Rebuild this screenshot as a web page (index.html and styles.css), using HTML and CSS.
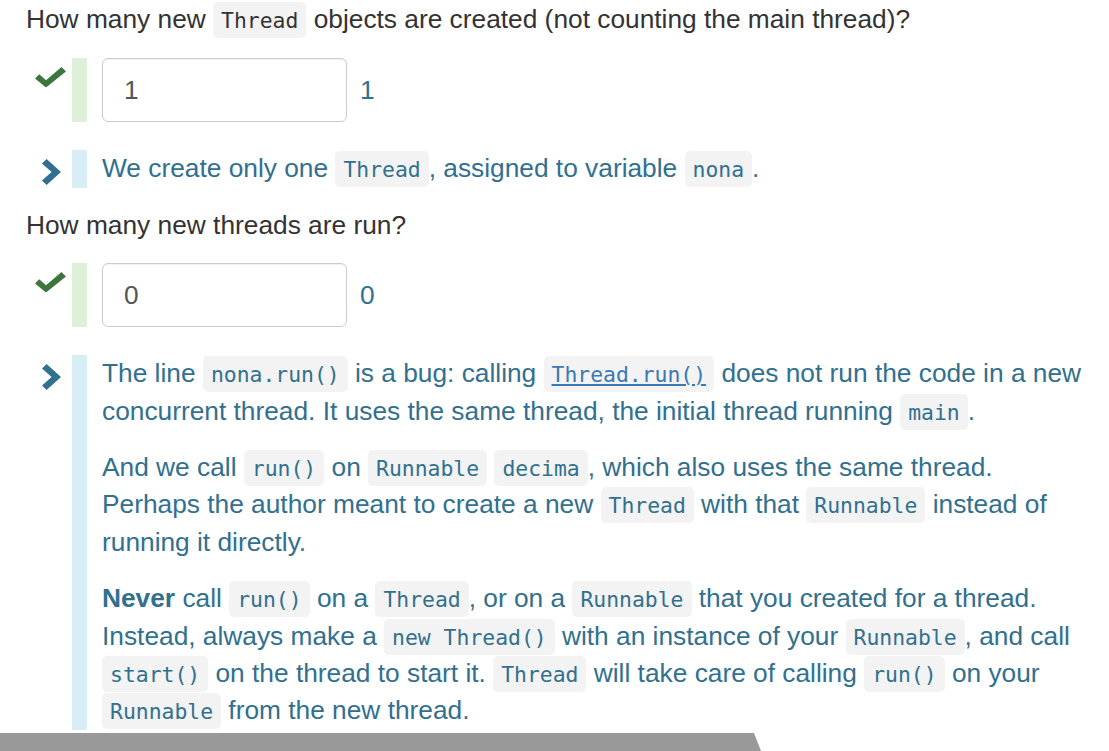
FILE: index.html
```html
<!DOCTYPE html>
<html lang="en">
<head>
<meta charset="utf-8">
<title>Threads quiz</title>
<link rel="stylesheet" href="styles.css">
</head>
<body>
<div class="page">
  <p class="question q1">How many new <code>Thread</code> objects are created (not counting the main thread)?</p>

  <div class="row answer">
    <div class="mark"><svg class="check" viewBox="0 0 31 20" width="31" height="20"><polygon points="0,11.5 4.2,7.3 11,13.2 26.5,0 31,4.4 11,20.5"/></svg></div>
    <div class="bar bar-ok"></div>
    <div class="input">1</div>
    <span class="echo">1</span>
  </div>

  <div class="row feedback fb1">
    <div class="mark"><svg class="chev" viewBox="0 0 19 26" width="19" height="26"><polygon points="0,4.6 4.6,0 19,13 4.6,26 0,21.4 9.6,13"/></svg></div>
    <div class="bar bar-info"></div>
    <div class="fb-text">
      <p>We create only one <code>Thread</code>, assigned to variable <code>nona</code>.</p>
    </div>
  </div>

  <p class="question q2">How many new threads are run?</p>

  <div class="row answer">
    <div class="mark"><svg class="check" viewBox="0 0 31 20" width="31" height="20"><polygon points="0,11.5 4.2,7.3 11,13.2 26.5,0 31,4.4 11,20.5"/></svg></div>
    <div class="bar bar-ok"></div>
    <div class="input">0</div>
    <span class="echo">0</span>
  </div>

  <div class="row feedback fb2">
    <div class="mark"><svg class="chev" viewBox="0 0 19 26" width="19" height="26"><polygon points="0,4.6 4.6,0 19,13 4.6,26 0,21.4 9.6,13"/></svg></div>
    <div class="bar bar-info"></div>
    <div class="fb-text">
      <p>The line <code>nona.run()</code> is a bug: calling <code><a href="#">Thread.run()</a></code> does not run the code in a new concurrent thread. It uses the same thread, the initial thread running <code>main</code>.</p>
      <p>And we call <code>run()</code> on <code>Runnable</code> <code>decima</code>, which also uses the same thread. Perhaps the author meant to create a new <code>Thread</code> with that <code>Runnable</code> instead of running it directly.</p>
      <p><strong>Never</strong> call <code>run()</code> on a <code>Thread</code>, or on a <code>Runnable</code> that you created for a thread. Instead, always make a <code>new Thread()</code> with an instance of your <code>Runnable</code>, and call <code>start()</code> on the thread to start it. <code>Thread</code> will take care of calling <code>run()</code> on your <code>Runnable</code> from the new thread.</p>
    </div>
  </div>
</div>
<div class="tab"></div>
</body>
</html>
```
FILE: styles.css
```css
html, body {
  margin: 0;
  padding: 0;
  background: #ffffff;
}

body {
  font-family: "Liberation Sans", Arial, sans-serif;
  font-size: 26.3px;
  line-height: 37.4px;
  color: #333333;
  overflow: hidden;
}

.page {
  padding: 1px 22px 0 26px;
}

p {
  margin: 0;
}

code {
  font-family: "DejaVu Sans Mono", "Liberation Mono", monospace;
  font-size: 21.4px;
  line-height: 1;
  background: #f3f3f3;
  border-radius: 5px;
  padding: 6px 8px 5px;
  color: inherit;
}

code a {
  color: #3a79b6;
  text-decoration: underline;
}

.question.q1 {
  margin-bottom: 20px;
}

.question.q2 {
  margin-top: 19px;
  margin-bottom: 19px;
}

.row {
  display: flex;
  align-items: stretch;
}

.mark {
  width: 46px;
  flex: none;
  display: flex;
}

.bar {
  width: 15px;
  flex: none;
  margin-right: 15px;
}

.bar-ok {
  background: #dff0d8;
}

.bar-info {
  background: #d9edf7;
}

.check {
  fill: #3c763d;
  margin: 9px 0 0 9px;
}

.chev {
  fill: #31708f;
  margin: 9px 0 0 16px;
}

.answer {
  height: 64px;
}

.input {
  width: 245px;
  box-sizing: border-box;
  border: 1px solid #cccccc;
  border-radius: 6px;
  box-shadow: inset 0 1px 1px rgba(0, 0, 0, 0.06);
  display: flex;
  align-items: center;
  padding-left: 21px;
  color: #555555;
}

.echo {
  display: flex;
  align-items: center;
  margin-left: 13px;
  color: #31708f;
}

.feedback {
  margin-top: 28px;
  color: #31708f;
}

.fb-text {
  flex: 1;
  max-width: 985px;
}

.fb-text p + p {
  margin-top: 19px;
}

.fb-text strong {
  font-weight: bold;
}

.tab {
  margin-top: 3px;
  width: 761px;
  height: 18px;
  background: #999999;
  clip-path: polygon(0 0, 754px 0, 761px 100%, 0 100%);
}
```
